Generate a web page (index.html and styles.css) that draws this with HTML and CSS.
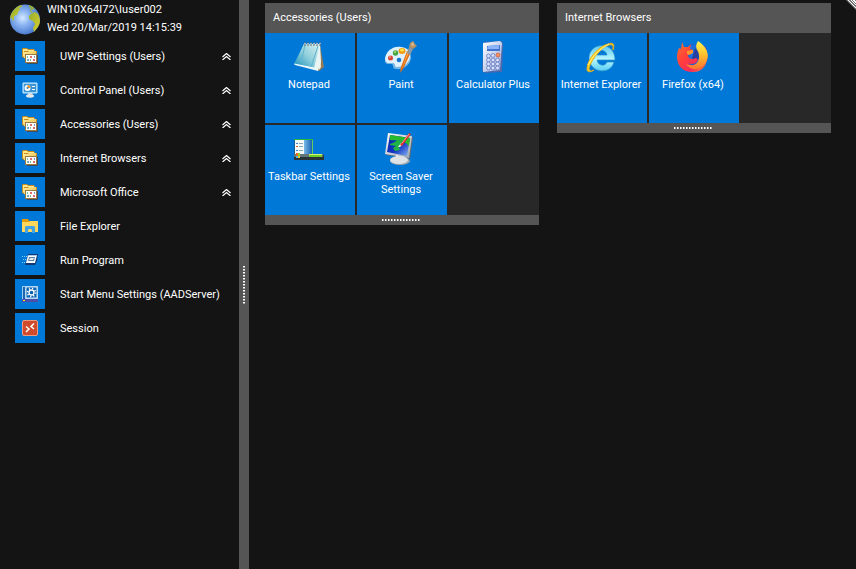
FILE: index.html
```html
<!DOCTYPE html>
<html lang="en">
<head>
<meta charset="utf-8">
<title>Start Menu</title>
<link rel="stylesheet" href="styles.css">
</head>
<body>
<svg class="defs" aria-hidden="true">
  <defs>
    <linearGradient id="gold" x1="0" y1="0" x2="1" y2="1"><stop offset="0" stop-color="#fff0a0"/><stop offset="1" stop-color="#e8b23c"/></linearGradient>
    <linearGradient id="silver" x1="0" y1="0" x2="1" y2="1"><stop offset="0" stop-color="#ffffff"/><stop offset="1" stop-color="#9aa3ad"/></linearGradient>
    <symbol id="folder" viewBox="0 0 16 16">
      <path d="M0 1 1 0h4l1 1h6l1 2h2v7H2L0 9Z" fill="#c98a1d"/>
      <path d="M1 1h4l1 1h6v1H2v6L1 8Z" fill="#ffe98c"/>
      <path d="M2 4h4l1-1h7v3H4v5L2 10Z" fill="url(#gold)"/>
      <path d="M3 6h12v9H3Z" fill="#9c7940"/>
      <path d="M5 15.500h10.500V7" fill="none" stroke="#3e4b5b"/>
      <path d="M4 7h10v7H4Z" fill="#fff"/>
      <path d="M5 8h1v2H5ZM8 11h1v2H8ZM5 11h1v2H5Z" fill="#7cc5a0"/>
      <path d="M8 8h2v2H8ZM11 11h2v2h-2Z" fill="#e06a6e"/>
      <path d="M12 8h1v2h-1ZM6 11h1v2H6Z" fill="#6e95cf"/>
    </symbol>
    <symbol id="chevrons" viewBox="0 0 9 7">
      <path d="M.5 4 4.500.5 8.500 4M.5 7l4-3.500 4 3.500" fill="none" stroke="#fff" stroke-width="1.200"/>
    </symbol>
  </defs>
</svg>

<div class="start-menu">
  <aside class="sidebar">
    <header class="account">
      <svg class="globe" viewBox="0 0 30 31" aria-hidden="true">
        <defs><radialGradient id="ocean" cx=".42" cy=".45" r=".62"><stop offset="0" stop-color="#d5eaff"/><stop offset=".4" stop-color="#8bb4f2"/><stop offset="1" stop-color="#3f70c8"/></radialGradient>
        <linearGradient id="land" x1="0" y1="0" x2="1" y2="1"><stop offset="0" stop-color="#8aa92d"/><stop offset="1" stop-color="#d9cf2d"/></linearGradient></defs>
        <circle cx="15" cy="15.500" r="15" fill="url(#ocean)"/>
        <path d="M1 10Q5 3 11 1l1 2-3 1 1 2-2 2-1 3-3 1 0 4-1 1-1-3-2 1Z" fill="url(#land)"/>
        <path d="m19 1 4 2 2 3-3-1-1 2 2 1-2 1-1-3 1-2-2-1ZM21 10l4-2 3 2q4 7 0 13l-4 5-1-4 2-4-2-3-4-2 0-3Z" fill="url(#land)"/>
      </svg>
      <div class="account-text"><div>WIN10X64I72\Iuser002</div><time datetime="2019-03-20T14:15:39">Wed 20/Mar/2019 14:15:39</time></div>
    </header>
    <nav class="menu">
      <button class="menu-item"><span class="menu-icon"><svg viewBox="0 0 16 16"><use href="#folder"/></svg></span><span class="menu-label">UWP Settings (Users)</span><svg class="chevron"><use href="#chevrons"/></svg></button>
      <button class="menu-item"><span class="menu-icon"><svg viewBox="0 0 16 16">
        <path d="M1 1h14v10H1Z" fill="#7ec3ef" stroke="#c9ebff"/><path d="M2 2h12v8H2Z" fill="#3a94d6"/>
        <circle cx="5.500" cy="6" r="3" fill="#fff"/><path d="M5.500 6V3a3 3 0 0 1 3 3Z" fill="#f49427"/><circle cx="5.500" cy="6" r="1" fill="#3a86c5"/>
        <path d="M10 4.500h3M10 7.500h3" stroke="#fff"/><path d="M7 11h3l2 3q-3 3-8 0Z" fill="url(#silver)"/><ellipse cx="8" cy="14" rx="4" ry="1.500" fill="#e4e8ea"/>
      </svg></span><span class="menu-label">Control Panel (Users)</span><svg class="chevron"><use href="#chevrons"/></svg></button>
      <button class="menu-item"><span class="menu-icon"><svg viewBox="0 0 16 16"><use href="#folder"/></svg></span><span class="menu-label">Accessories (Users)</span><svg class="chevron"><use href="#chevrons"/></svg></button>
      <button class="menu-item"><span class="menu-icon"><svg viewBox="0 0 16 16"><use href="#folder"/></svg></span><span class="menu-label">Internet Browsers</span><svg class="chevron"><use href="#chevrons"/></svg></button>
      <button class="menu-item"><span class="menu-icon"><svg viewBox="0 0 16 16"><use href="#folder"/></svg></span><span class="menu-label">Microsoft Office</span><svg class="chevron"><use href="#chevrons"/></svg></button>
      <button class="menu-item"><span class="menu-icon"><svg viewBox="0 0 16 16">
        <path d="M0 1h6l1 2h9v11H0Z" fill="#e69a05"/><path d="M0 4h7l1-1h8v11H0Z" fill="#ffd75d"/>
        <path d="M3 15V9l1-1h8l1 1v6h-3v-3l-1-1H7l-1 1v3Z" fill="#43a4e5"/>
      </svg></span><span class="menu-label">File Explorer</span></button>
      <button class="menu-item"><span class="menu-icon"><svg viewBox="0 0 16 16">
        <path d="M6 2h10l-1 7-2 4H3l1-3Z" fill="#12386f"/><path d="M6 3h9l-2 8H4Z" fill="#f7fbff"/><path d="M6 3h9v1H6Z" fill="#a8cbed"/><path d="M7 5h6l-1 4H6Z" fill="#5b7ea3"/><path d="M8 6h4l-1 2H7Z" fill="#e6ece8"/>
        <path d="M0 4.500h5M1 7.500h3M0 10.500h3" stroke="#8bc9ff" stroke-dasharray="1 1"/>
      </svg></span><span class="menu-label">Run Program</span></button>
      <button class="menu-item"><span class="menu-icon"><svg viewBox="0 0 16 16">
        <path d="M0 0h16v13l-1 3H0Z" fill="#9acaf0"/><path d="M1 1h2v12H1Z" fill="#1e65ad"/><path d="M4 1h11v11H4Z" fill="#0b63b1"/><path d="M4 1h11v11H4Z" fill="none" stroke="#cfe6f8"/>
        <path d="M0 13h16v3H0Z" fill="#4b4fa8"/><path d="M1 14h2v1H1Z" fill="#ffe33d"/>
        <circle cx="9.500" cy="6.500" r="2.500" fill="none" stroke="#fff" stroke-width="1.300"/><circle cx="9.500" cy="6.500" r="4" fill="none" stroke="#fff" stroke-width="1.500" stroke-dasharray="1.200 1.940"/>
      </svg></span><span class="menu-label">Start Menu Settings (AADServer)</span></button>
      <button class="menu-item"><span class="menu-icon"><svg viewBox="0 0 16 16">
        <rect x=".5" y=".5" width="15" height="15" rx="1.500" fill="#cf4b2b" stroke="#ef9b82"/>
        <path d="m4 6.500 3 2.500L4 12M12 3.500 9 6.500l3 2.500" fill="none" stroke="#fff" stroke-width="1.500"/>
      </svg></span><span class="menu-label">Session</span></button>
    </nav>
  </aside>
  <div class="splitter" role="separator" aria-orientation="vertical"><span class="grip grip-vertical"></span></div>

  <main class="workspace">
    <section class="panel">
      <h2 class="panel-title">Accessories (Users)</h2>
      <div class="tiles">
        <button class="tile"><svg class="tile-icon" viewBox="0 0 32 32">
          <defs><linearGradient id="pad" x1="0" y1="1" x2="1" y2="0"><stop offset="0" stop-color="#148fb8"/><stop offset=".5" stop-color="#8fcfdd"/><stop offset="1" stop-color="#d9f0ef"/></linearGradient></defs>
          <path d="m27 4 4 22-5 4-7-3Z" fill="#927d58"/><path d="m26 4 2 22-2 3Z" fill="#f4eed8"/>
          <path d="M11 3h16l1 18-3 9-23-6Z" fill="#e9f5f5"/><path d="M11 3h16L21 27 1 23Z" fill="url(#pad)"/>
          <path d="m12 4-4 18M25 5 18 26" fill="none" stroke="#61b4ca"/><path d="M1 23 21 27l4 2" fill="none" stroke="#effeff"/>
          <path d="M12 1v4M15 1v4M18 1v4M21 1v4M24 1v4M27 1v4" stroke="#686b70"/><path d="M12 2v1M15 2v1M18 2v1M21 2v1M24 2v1M27 2v1" stroke="#fff"/>
        </svg><span>Notepad</span></button>
        <button class="tile"><svg class="tile-icon" viewBox="0 0 32 32">
          <path d="M0 19C0 11 8 5 16 6q10 1 10 10c0 8-8 13-15 12-4 0-2-4-4-5-3 0-7 1-7-4Z" fill="#7ab8e4"/>
          <path d="M0 18C1 10 8 5 16 6q9 1 9 9c0 7-7 11-13 11-3 0-1-4-4-4-4 0-7 1-8-4Z" fill="#dff1fd"/>
          <circle cx="5.500" cy="17" r="2.500" fill="#dc4436"/><circle cx="5" cy="16" r="1" fill="#f78b79"/>
          <circle cx="10.500" cy="12" r="2.700" fill="#43a446"/><circle cx="10" cy="11" r="1.200" fill="#9bd467"/>
          <ellipse cx="17" cy="10" rx="3.500" ry="3" fill="#f49c12"/><ellipse cx="17" cy="9" rx="2" ry="1.500" fill="#ffe348"/>
          <circle cx="14" cy="19" r="2.300" fill="#1777cc"/>
          <path d="m22 10 4 1-8 17-3 4 1-6Z" fill="#e36f13"/><path d="m23 10 1 1-7 17Z" fill="#ffb254"/>
          <path d="m24 6 4 2-3 6-3-2Z" fill="#8898a4"/><path d="m24 6 1-4 3-2 2 3 2 2-4 3Z" fill="#b89265"/><path d="m26 4 2-3 1 4Z" fill="#e0c39a"/>
        </svg><span>Paint</span></button>
        <button class="tile"><svg class="tile-icon" viewBox="0 0 32 32">
          <defs><linearGradient id="calc" x1="0" y1="0" x2="1" y2="1"><stop offset="0" stop-color="#fff"/><stop offset="1" stop-color="#94a7dc"/></linearGradient></defs>
          <path d="m7 1 17-1 2 2-1 29-17 1-3-3Z" fill="#4e68ac"/><path d="m6 2 17-2 2 2-2 27-17 2Z" fill="url(#calc)"/>
          <path d="m10 5 13-1v6H10Z" fill="#4273cf"/><path d="m11 5 11-1v4H10Z" fill="#8bb4fa"/>
          <g fill="#dbe5ff" stroke="#6479bd" stroke-width=".8"><circle cx="11.500" cy="15" r="1.900"/><circle cx="16" cy="14.500" r="1.900"/><circle cx="11.500" cy="19" r="1.900"/><circle cx="16" cy="19" r="1.900"/><circle cx="20.500" cy="19" r="1.900"/><circle cx="11.500" cy="23" r="1.900"/><circle cx="16" cy="23" r="1.900"/><circle cx="20.500" cy="23" r="1.900"/><circle cx="11.500" cy="27" r="1.900"/><circle cx="16" cy="27" r="1.900"/><circle cx="20.500" cy="27" r="1.900"/></g>
          <circle cx="21" cy="14" r="2" fill="#ff925a" stroke="#bd5743" stroke-width=".7"/>
        </svg><span>Calculator Plus</span></button>
        <button class="tile"><svg class="tile-icon" viewBox="0 0 32 32">
          <defs><linearGradient id="taskmenu"><stop offset="0" stop-color="#79b9e7"/><stop offset="1" stop-color="#1861b1"/></linearGradient></defs>
          <path d="M1 6h19v18H1Z" fill="#176093"/><path d="M2 7h9v14H2Z" fill="#f5faf9"/><path d="M11 7h8v14h-8Z" fill="url(#taskmenu)"/>
          <path d="M1 6.500h19" stroke="#22b93c"/><path d="M19.500 7v14" stroke="#65ce62"/><path d="M6 10.500h4M6 13.500h4M6 17.500h4" stroke="#8aa8b8"/>
          <path d="M3 10h2v1H3ZM3 17h2v1H3Z" fill="#3a86d0"/><path d="M3 13h2v1H3Z" fill="#e55c2b"/>
          <path d="M1 21h29l1 2v4H1Z" fill="#283437"/><path d="M1 21h29v3H1Z" fill="#62767a"/><path d="M16 22h13v2H16Z" fill="#70cf24"/><path d="M16 21h13v1H16Z" fill="#d3f47b"/>
          <path d="M3 20h2v3H3Z" fill="#ee6726"/><path d="M5 20h2v3H5Z" fill="#8fd22d"/><path d="M3 23h2v2H3Z" fill="#4bb4e9"/><path d="M5 23h2v2H5Z" fill="#f0ca28"/>
        </svg><span>Taskbar Settings</span></button>
        <button class="tile"><svg class="tile-icon" viewBox="0 0 32 32">
          <defs><linearGradient id="screen" x1="0" y1="0" x2="1" y2="1"><stop offset="0" stop-color="#0826a4"/><stop offset=".55" stop-color="#1436c4"/><stop offset="1" stop-color="#8abcf4"/></linearGradient></defs>
          <path d="m3 1 25 3-3 22L1 22Z" fill="#646d77"/><path d="m3 0 24 3-3 22L0 21Z" fill="url(#silver)"/>
          <path d="m5 2 20 3-3 18L2 19Z" fill="url(#screen)"/><path d="m5 2 20 3-1 8c-6-7-11-5-19-6Z" fill="#27bc2d"/>
          <path d="m5 11 5-2 2-2 5 1 1 4-4 2 1 3-5 1-2-3 3-2-6-1Z" fill="#20b447"/>
          <path d="m13 14 3-4 2 1-3 3Z" fill="#eef2ff"/><path d="m15 12 9-12 2 1-9 12Z" fill="#df3028"/><path d="m17 10 7-9" stroke="#f7a196"/>
          <path d="m11 22 9 2 1 4-9 1Z" fill="url(#silver)"/><ellipse cx="15" cy="28" rx="10" ry="4" fill="#9da5ad"/><ellipse cx="14" cy="27" rx="9" ry="4" fill="#dfe3e6"/>
        </svg><span>Screen Saver Settings</span></button>
      </div>
      <div class="panel-footer"><span class="grip"></span></div>
    </section>
    <section class="panel">
      <h2 class="panel-title">Internet Browsers</h2>
      <div class="tiles">
        <button class="tile"><svg class="tile-icon" viewBox="0 0 32 32">
          <defs><linearGradient id="ie" x1="0" y1="0" x2="0" y2="1"><stop offset="0" stop-color="#5ac8f6"/><stop offset=".55" stop-color="#b9f6ff"/><stop offset="1" stop-color="#55cdf3"/></linearGradient></defs>
          <path d="M30 19H12c1 6 8 7 10 2h7C26 34 5 33 4 17 4 1 30-1 30 19ZM12 14h10c-1-6-9-6-10 0Z" fill="url(#ie)" stroke="#278fc8" stroke-width=".7"/>
          <path d="M28 9c2-6 0-8-5-6C14 5 2 18 2 28c0 4 4 3 7 1-3 2-5 1-5-2C7 17 18 5 24 4c5-1 4 2 4 5Z" fill="#ffd724" stroke="#e7ae18"/>
          <path d="M24 3Q10 10 3 24" fill="none" stroke="#fff294"/>
        </svg><span>Internet Explorer</span></button>
        <button class="tile"><svg class="tile-icon" viewBox="0 0 32 32">
          <defs><linearGradient id="fox" x1="0" y1="0" x2="1" y2="1"><stop offset="0" stop-color="#ff762c"/><stop offset=".38" stop-color="#ff403a"/><stop offset=".7" stop-color="#f72b5c"/><stop offset="1" stop-color="#ff9a22"/></linearGradient>
          <linearGradient id="tail" x1="0" y1="0" x2="0" y2="1"><stop offset="0" stop-color="#fff44f"/><stop offset=".45" stop-color="#ffc52e"/><stop offset="1" stop-color="#ff7330"/></linearGradient></defs>
          <circle cx="16" cy="14" r="11" fill="#1265d3"/><path d="M10 6q6-5 12 1l-1 11-8 3Z" fill="#1b6fdd"/><path d="M18 7q7 6 2 13l-6 1Z" fill="#2540a0"/>
          <path d="m5 1 2 5 4 0 3-3-1 5 3 1-1 3-4 2c0 4 4 5 8 3l2 2c-1 4-7 5-10 3 5 5 14 0 13-7 5-1 5-7 3-11C33 11 32 31 16 31-1 31-2 15 2 7l2 1Z" fill="url(#fox)"/>
          <path d="M21 0c-5 9 2 8 1 17-1 7-7 9-13 6 5 8 17 7 21-4 3-8-3-15-9-19Z" fill="url(#tail)"/>
          <path d="m10 10 6-1 0 3-4 2-2-1Z" fill="#ff962b"/>
        </svg><span>Firefox (x64)</span></button>
      </div>
      <div class="panel-footer"><span class="grip"></span></div>
    </section>
  </main>
  <span class="corner" aria-hidden="true"></span>
</div>
</body>
</html>
```
FILE: styles.css
```css
* { box-sizing: border-box; }

body {
  margin: 0;
  background: #141414;
  color: #fff;
  font-family: Roboto, "Liberation Sans", sans-serif;
  font-size: 11px;
  line-height: 14px;
}

button {
  border: 0;
  padding: 0;
  color: inherit;
  font: inherit;
  cursor: pointer;
}

.defs {
  position: absolute;
  width: 0;
  height: 0;
}

.start-menu {
  position: relative;
  display: flex;
  min-height: 100vh;
}

.sidebar { flex: 0 0 239px; }

.account {
  display: flex;
  align-items: center;
  gap: 7px;
  padding: 1px 10px 0;
  line-height: 18px;
}

.globe {
  width: 30px;
  height: 31px;
}

.menu {
  display: grid;
  gap: 4px;
  padding: 4px 8px 0 15px;
}

.menu-item {
  display: flex;
  align-items: center;
  gap: 15px;
  background: none;
  text-align: left;
}

.menu-icon {
  display: grid;
  place-items: center;
  width: 30px;
  height: 30px;
  background: #0078d7;
}

.menu-icon svg {
  width: 16px;
  height: 16px;
}

.menu-label {
  flex: 1;
  padding-top: 1px;
  white-space: nowrap;
}

.chevron {
  width: 9px;
  height: 7px;
}

.splitter {
  display: flex;
  flex: 0 0 10px;
  align-items: center;
  justify-content: center;
  background: #555;
  cursor: col-resize;
}

.grip {
  width: 38px;
  height: 2px;
  background: repeating-linear-gradient(90deg, #fff 0 1px, #aaa 1px 2px, #555 2px 3px);
}

.grip-vertical {
  width: 2px;
  height: 38px;
  background: repeating-linear-gradient(#fff 0 1px, #aaa 1px 2px, #555 2px 3px);
}

.workspace {
  display: flex;
  flex: 1;
  flex-wrap: wrap;
  align-items: flex-start;
  align-content: flex-start;
  gap: 18px;
  padding: 3px 0 3px 16px;
}

.panel { background: #282828; }

.panel-title {
  margin: 0;
  padding: 0 8px;
  background: #555;
  font-size: 11px;
  font-weight: 400;
  line-height: 30px;
}

.tiles {
  display: grid;
  grid-template-columns: repeat(3, 90px);
  grid-auto-rows: 90px;
  gap: 2px;
}

.tile {
  display: flex;
  flex-direction: column;
  align-items: center;
  gap: 5px;
  padding: 8px 3px 0 1px;
  background: #0078d7;
  line-height: 13px;
}

.tile-icon {
  width: 32px;
  height: 32px;
}

.panel-footer {
  display: flex;
  align-items: center;
  justify-content: center;
  height: 10px;
  padding-right: 2px;
  background: #555;
}

.corner {
  position: absolute;
  top: 0;
  right: 0;
  width: 10px;
  height: 10px;
  background: repeating-linear-gradient(45deg, #fff 0 1px, #777 1px 2px);
  clip-path: polygon(0 0, 100% 0, 100% 100%);
}
```
